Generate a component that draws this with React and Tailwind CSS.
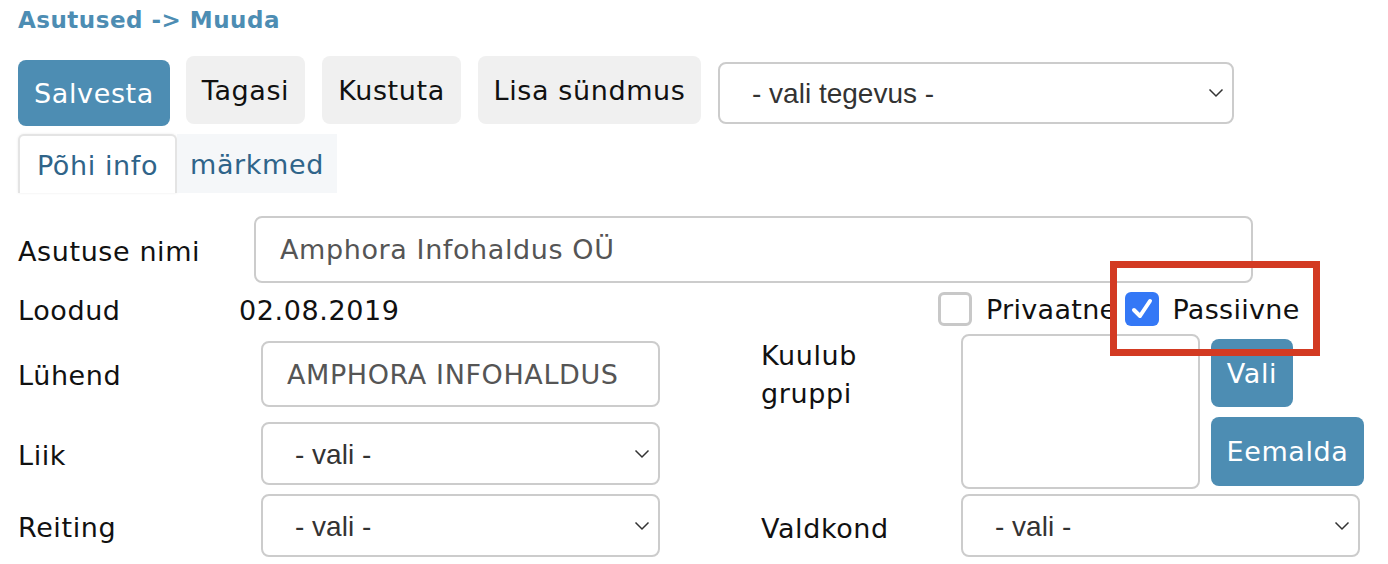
import React from 'react';

const Chevron = () => (
  <svg width="16" height="10" viewBox="0 0 16 10" className="shrink-0">
    <path d="M1.5 1.5 L8 8 L14.5 1.5" fill="none" stroke="#333" strokeWidth="1.5" />
  </svg>
);

const Select = ({ label, className = '' }) => (
  <div
    className={`flex items-center justify-between rounded-[8px] border-2 border-[#cccccc] bg-white pl-[32px] pr-[8px] text-[28px] tracking-normal text-[#333] ${className}`}
    style={{ fontFamily: '"Liberation Sans", Arial, sans-serif' }}
  >
    <span className="pt-[2px]">{label}</span>
    <Chevron />
  </div>
);

const Input = ({ value, className = '' }) => (
  <div className={`flex items-center rounded-[8px] border-2 border-[#cccccc] bg-white pl-[24px] pt-[2px] text-[#555] ${className}`}>
    {value}
  </div>
);

const Checkbox = ({ checked }) =>
  checked ? (
    <div className="flex h-[34px] w-[34px] items-center justify-center rounded-[6px] bg-[#3478f6]">
      <svg width="24" height="24" viewBox="0 0 24 24">
        <path d="M4 13 L10 19 L20 4" fill="none" stroke="#fff" strokeWidth="4" strokeLinecap="round" strokeLinejoin="round" />
      </svg>
    </div>
  ) : (
    <div className="h-[34px] w-[34px] rounded-[6px] border-[3px] border-[#c8c8c8] bg-white" />
  );

export default function App() {
  return (
    <div
      className="relative h-[564px] w-[1388px] overflow-hidden bg-white px-[18px] text-[27px] tracking-[0.6px] text-[#111]"
      style={{ fontFamily: '"DejaVu Sans", Verdana, sans-serif' }}
    >
      <div className="pt-[5px] text-[23px] font-bold leading-[30px] tracking-[0.5px] text-[#4d8db3]">Asutused -&gt; Muuda</div>

      <div className="mt-[21px] flex items-start gap-[16px]">
        <div className="mt-[4px] flex h-[66px] w-[152px] items-center justify-center rounded-[8px] bg-[#4d8db3] pt-[2px] text-white">
          Salvesta
        </div>
        <div className="flex h-[68px] w-[119px] items-center justify-center rounded-[8px] bg-[#f0f0f0] pt-[2px]">Tagasi</div>
        <div className="ml-[1px] flex h-[68px] w-[139px] items-center justify-center rounded-[8px] bg-[#f0f0f0] pt-[2px]">Kustuta</div>
        <div className="ml-[1px] flex h-[68px] w-[223px] items-center justify-center rounded-[8px] bg-[#f0f0f0] pt-[2px]">Lisa sündmus</div>
        <Select label="- vali tegevus -" className="ml-[1px] mt-[6px] h-[62px] w-[516px]" />
      </div>

      <div className="mt-[8px] flex text-[#2f6489]">
        <div className="flex h-[59px] w-[159px] items-center justify-center rounded-t-[6px] border-2 border-b-0 border-[#e4e4e4] bg-white pt-[4px] shadow-[0_0_3px_rgba(0,0,0,0.08)]">
          Põhi info
        </div>
        <div className="flex h-[59px] w-[160px] items-center justify-center bg-[#f5f7f9] pt-[4px]">märkmed</div>
      </div>

      <div className="mt-[23px] flex items-center">
        <div className="w-[236px] pt-[6px]">Asutuse nimi</div>
        <Input value="Amphora Infohaldus OÜ" className="h-[67px] w-[999px]" />
      </div>

      <div className="flex h-[51px] items-center">
        <div className="w-[221px] pt-[6px]">Loodud</div>
        <div className="w-[699px] pt-[6px]">02.08.2019</div>
        <div className="flex items-center">
          <Checkbox />
          <span className="ml-[14px] pt-[4px] tracking-[0.3px]">Privaatne</span>
          <div className="ml-[8px]">
            <Checkbox checked />
          </div>
          <span className="ml-[14px] pt-[4px] tracking-[0.3px]">Passiivne</span>
        </div>
      </div>

      <div className="flex">
        <div className="w-[642px]">
          <div className="mt-[7px] flex items-center">
            <div className="w-[243px] pt-[4px]">Lühend</div>
            <Input value="AMPHORA INFOHALDUS" className="h-[66px] w-[399px]" />
          </div>
          <div className="mt-[15px] flex items-center">
            <div className="w-[243px] pt-[6px]">Liik</div>
            <Select label="- vali -" className="h-[63px] w-[399px]" />
          </div>
          <div className="mt-[9px] flex items-center">
            <div className="w-[243px] pt-[6px]">Reiting</div>
            <Select label="- vali -" className="h-[63px] w-[399px]" />
          </div>
          <div className="mt-[8px] ml-[243px] h-[40px] w-[399px] rounded-[8px] border-2 border-[#cccccc]" />
        </div>

        <div className="ml-[101px]">
          <div className="flex">
            <div className="w-[200px] pt-[3px] leading-[38px]">
              Kuulub
              <br />
              gruppi
            </div>
            <div className="h-[155px] w-[239px] rounded-[8px] border-2 border-[#cccccc]" />
            <div className="ml-[11px] flex flex-col items-start">
              <div className="mt-[5px] flex h-[68px] w-[82px] items-center justify-center rounded-[8px] bg-[#4d8db3] pt-[2px] text-white">
                Vali
              </div>
              <div className="mt-[10px] flex h-[69px] w-[153px] items-center justify-center rounded-[8px] bg-[#4d8db3] pt-[2px] text-white">
                Eemalda
              </div>
            </div>
          </div>
          <div className="mt-[5px] flex items-center">
            <div className="w-[200px] pt-[8px]">Valdkond</div>
            <Select label="- vali -" className="h-[63px] w-[399px]" />
          </div>
          <div className="mt-[8px] ml-[200px] h-[40px] w-[399px] rounded-[8px] border-2 border-[#cccccc]" />
        </div>
      </div>

      <div className="pointer-events-none absolute left-[1110px] top-[261px] h-[95px] w-[210px] border-[7px] border-[#d33a22]" />
    </div>
  );
}
